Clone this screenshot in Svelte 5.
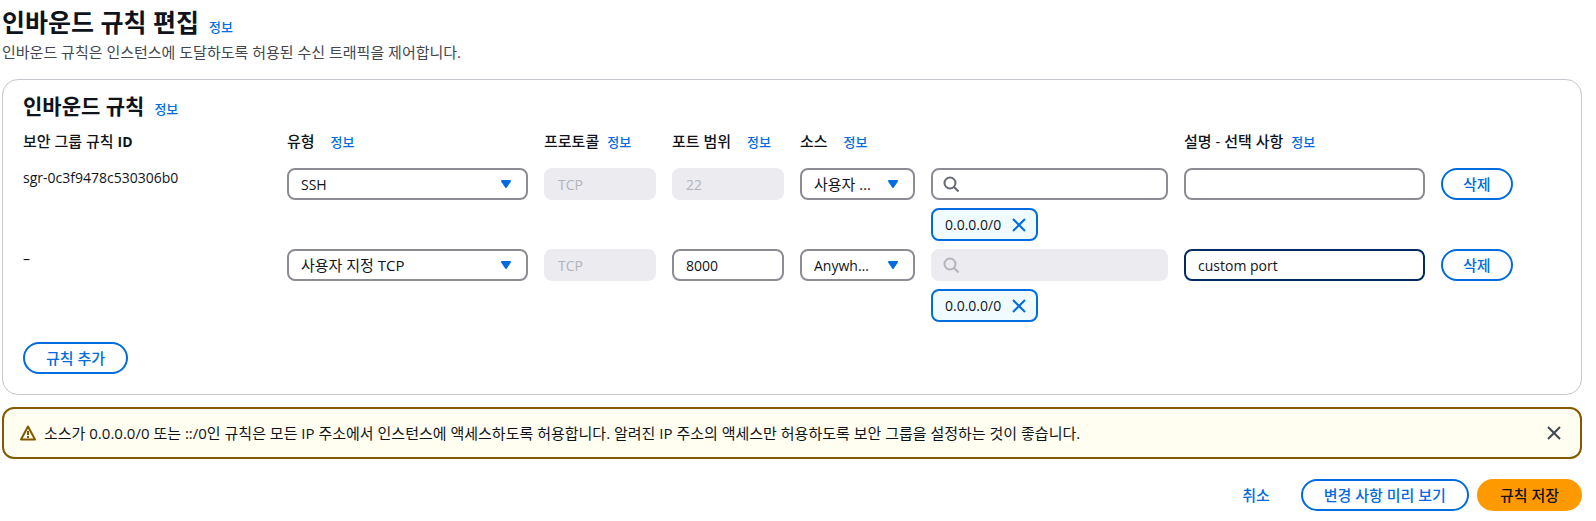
<script lang="ts">
	interface Rule {
		id: string;
		type: string;
		protocol: string;
		port: string;
		portLocked: boolean;
		source: string;
		searchLocked: boolean;
		cidrs: string[];
		description: string;
		active: boolean;
	}

	const columns = [
		{ key: 'id', label: '보안 그룹 규칙', suffix: 'ID', info: false },
		{ key: 'type', label: '유형', info: true, wide: true },
		{ key: 'protocol', label: '프로토콜', info: true },
		{ key: 'port', label: '포트 범위', info: true, wide: true },
		{ key: 'source', label: '소스', info: true, wide: true },
		{ key: 'search', label: '', info: false },
		{ key: 'description', label: '설명 - 선택 사항', info: true }
	];

	const types = ['SSH', '사용자 지정 TCP'];
	const sources = ['사용자 지정', 'Anywhere-IPv4'];

	let rules: Rule[] = $state([
		{
			id: 'sgr-0c3f9478c530306b0',
			type: 'SSH',
			protocol: 'TCP',
			port: '22',
			portLocked: true,
			source: '사용자 지정',
			searchLocked: false,
			cidrs: ['0.0.0.0/0'],
			description: '',
			active: false
		},
		{
			id: '–',
			type: '사용자 지정 TCP',
			protocol: 'TCP',
			port: '8000',
			portLocked: false,
			source: 'Anywhere-IPv4',
			searchLocked: true,
			cidrs: ['0.0.0.0/0'],
			description: 'custom port',
			active: true
		}
	]);
	let showWarning = $state(true);

	function addRule() {
		rules.push({
			id: '–',
			type: '사용자 지정 TCP',
			protocol: 'TCP',
			port: '',
			portLocked: false,
			source: '사용자 지정',
			searchLocked: false,
			cidrs: [],
			description: '',
			active: false
		});
	}

	function isKorean(text: string) {
		return /[가-힣]/.test(text);
	}
</script>

{#snippet cross()}
	<svg class="cross" viewBox="0 0 16 16" aria-hidden="true">
		<path d="m2 2 12 12M14 2 2 14" />
	</svg>
{/snippet}

{#snippet caret()}
	<svg class="caret" viewBox="0 0 16 16" aria-hidden="true">
		<path d="M4 5h8l-4 6z" />
	</svg>
{/snippet}

<main class="page">
	<header class="page-header">
		<div class="heading">
			<h1>인바운드 규칙 편집</h1>
			<a class="info" href="#info">정보</a>
		</div>
		<p>인바운드 규칙은 인스턴스에 도달하도록 허용된 수신 트래픽을 제어합니다.</p>
	</header>

	<section class="card">
		<div class="heading">
			<h2>인바운드 규칙</h2>
			<a class="info" href="#info-rules">정보</a>
		</div>

		<div class="grid labels">
			{#each columns as column (column.key)}
				<div class="label" class:wide={column.wide}>
					<span id="col-{column.key}">
						{column.label}
						{#if column.suffix}<b>{column.suffix}</b>{/if}
					</span>
					{#if column.info}
						<a class="info" href="#info-{column.key}">정보</a>
					{/if}
				</div>
			{/each}
		</div>

		<div class="rules">
			{#each rules as rule, i}
				<div class="grid">
					<div class="rule-id">{rule.id}</div>
					<div class="select">
						<select class="control" class:korean={isKorean(rule.type)} aria-labelledby="col-type" bind:value={rule.type}>
							{#each types as type}
								<option>{type}</option>
							{/each}
						</select>
						{@render caret()}
					</div>
					<input class="control" aria-labelledby="col-protocol" value={rule.protocol} disabled />
					<input class="control" aria-labelledby="col-port" bind:value={rule.port} disabled={rule.portLocked} />
					<div class="select">
						<select class="control" class:korean={isKorean(rule.source)} aria-labelledby="col-source" bind:value={rule.source}>
							{#each sources as source}
								<option>{source}</option>
							{/each}
						</select>
						{@render caret()}
					</div>
					<div class="source">
						<div class="search" class:locked={rule.searchLocked}>
							<svg viewBox="0 0 16 16" aria-hidden="true">
								<circle cx="7" cy="7" r="5.5" />
								<path d="m11 11 4.5 4.5" />
							</svg>
							<input class="control" type="text" aria-label="소스 검색" disabled={rule.searchLocked} />
						</div>
						{#each rule.cidrs as cidr, n}
							<span class="token">
								{cidr}
								<button aria-label="{cidr} 제거" onclick={() => rule.cidrs.splice(n, 1)}>{@render cross()}</button>
							</span>
						{/each}
					</div>
					<input class="control" class:active={rule.active} aria-labelledby="col-description" bind:value={rule.description} />
					<button class="btn btn-remove" onclick={() => rules.splice(i, 1)}>삭제</button>
				</div>
			{/each}
		</div>

		<button class="btn" onclick={addRule}>규칙 추가</button>
	</section>

	{#if showWarning}
		<div class="warning" role="alert">
			<svg class="warning-icon" viewBox="0 0 16 16" aria-hidden="true">
				<path d="M8 1.5 15 14.5H1z" />
				<path d="M8 6v4M8 11v2" />
			</svg>
			<p>
				소스가 0.0.0.0/0 또는 ::/0인 규칙은 모든 IP 주소에서 인스턴스에 액세스하도록 허용합니다. 알려진 IP 주소의 액세스만
				허용하도록 보안 그룹을 설정하는 것이 좋습니다.
			</p>
			<button class="dismiss" aria-label="닫기" onclick={() => (showWarning = false)}>{@render cross()}</button>
		</div>
	{/if}

	<footer class="actions">
		<button class="btn btn-link">취소</button>
		<button class="btn">변경 사항 미리 보기</button>
		<button class="btn btn-primary">규칙 저장</button>
	</footer>
</main>

<style>
	:global(body) {
		background: #fff;
	}

	.page {
		--blue: #006ce0;
		--text: #0f141a;
		padding: 7px 14px 10px 2px;
		color: var(--text);
		font-family: 'Open Sans', 'Noto Sans CJK KR', sans-serif;
		font-size: 15px;
		line-height: 22px;
	}

	h1,
	h2,
	p {
		margin: 0;
	}

	h1 {
		font-size: 25px;
		line-height: 30px;
		font-weight: 700;
	}

	h2 {
		font-size: 21px;
		line-height: 28px;
		font-weight: 700;
	}

	.heading {
		display: flex;
		align-items: baseline;
		gap: 10px;
	}

	.page-header p {
		margin-top: 3px;
		color: #424650;
	}

	.info {
		color: var(--blue);
		font-size: 13px;
		font-weight: 500;
		text-decoration: none;
	}

	.card {
		margin-top: 16px;
		padding: 12px 20px 20px;
		border: 1px solid #c6c6cd;
		border-radius: 16px;
	}

	.grid {
		display: grid;
		grid-template-columns:
			minmax(0, 248fr) minmax(0, 241fr) minmax(0, 112fr) minmax(0, 112fr)
			minmax(0, 115fr) minmax(0, 237fr) minmax(0, 241fr) minmax(0, 120fr);
		gap: 16px;
		align-items: start;
		justify-items: stretch;
	}

	.labels {
		margin: 10px 0 15px;
	}

	.label {
		display: flex;
		align-items: baseline;
		gap: 8px;
		font-weight: 500;
		white-space: nowrap;
	}

	.label b {
		font-size: 14px;
		font-weight: 700;
	}

	.label.wide {
		gap: 16px;
	}

	.rules {
		display: flex;
		flex-direction: column;
		gap: 8px;
		margin-bottom: 20px;
	}

	.rule-id {
		font-size: 14px;
		line-height: 20px;
	}

	.control {
		box-sizing: border-box;
		display: block;
		width: 100%;
		height: 32px;
		padding: 0 12px;
		border: 2px solid #8c8c94;
		border-radius: 8px;
		background: #fff;
		color: var(--text);
		font-family: inherit;
		font-size: 14px;
		outline: none;
	}

	.control.korean {
		font-size: 15px;
	}

	.control:focus,
	.control.active {
		border-color: #002b66;
	}

	.control:disabled {
		border-color: #ebebf0;
		background: #ebebf0;
		color: #b4b4bb;
	}

	.select,
	.search {
		position: relative;
	}

	select.control {
		appearance: none;
		padding-right: 38px;
		overflow: hidden;
		text-overflow: ellipsis;
		white-space: nowrap;
	}

	.caret {
		position: absolute;
		top: 8px;
		right: 14px;
		width: 16px;
		height: 16px;
		fill: var(--blue);
		stroke: var(--blue);
		stroke-width: 2;
		stroke-linejoin: round;
		pointer-events: none;
	}

	.search svg {
		position: absolute;
		top: 8px;
		left: 12px;
		width: 16px;
		height: 16px;
		fill: none;
		stroke: #656871;
		stroke-width: 2;
	}

	.search.locked svg {
		stroke: #b4b4bb;
	}

	.search .control {
		padding-left: 36px;
	}

	.source {
		display: flex;
		flex-direction: column;
		align-items: flex-start;
		gap: 8px;
	}

	.search {
		width: 100%;
	}

	.token {
		box-sizing: border-box;
		display: flex;
		align-items: center;
		gap: 10px;
		height: 33px;
		padding: 0 9px 0 12px;
		border: 2px solid var(--blue);
		border-radius: 8px;
		background: #f0fbff;
		font-size: 14px;
	}

	.token button,
	.dismiss {
		display: flex;
		padding: 0;
		border: 0;
		background: none;
		color: var(--blue);
		cursor: pointer;
	}

	.cross {
		width: 16px;
		height: 16px;
		fill: none;
		stroke: currentColor;
		stroke-width: 2;
	}

	.btn {
		box-sizing: border-box;
		justify-self: start;
		height: 32px;
		padding: 0 21px;
		border: 2px solid var(--blue);
		border-radius: 20px;
		background: #fff;
		color: var(--blue);
		font-family: inherit;
		font-size: 15px;
		font-weight: 500;
		line-height: 22px;
		white-space: nowrap;
		cursor: pointer;
	}

	.btn-remove {
		padding: 0 20px;
	}

	.btn-link {
		border-color: transparent;
	}

	.btn-primary {
		border-color: #ff9900;
		background: #ff9900;
		color: var(--text);
	}

	.warning {
		display: flex;
		align-items: center;
		gap: 8px;
		margin-top: 12px;
		padding: 13px 18px 13px 16px;
		border: 2px solid #855900;
		border-radius: 12px;
		background: #fffef0;
	}

	.warning p {
		flex: 1;
	}

	.warning-icon {
		width: 16px;
		height: 16px;
		fill: none;
		stroke: #855900;
		stroke-width: 2;
		stroke-linejoin: round;
	}

	.dismiss {
		color: #424650;
	}

	.actions {
		display: flex;
		justify-content: flex-end;
		gap: 8px;
		margin-top: 20px;
	}
</style>
